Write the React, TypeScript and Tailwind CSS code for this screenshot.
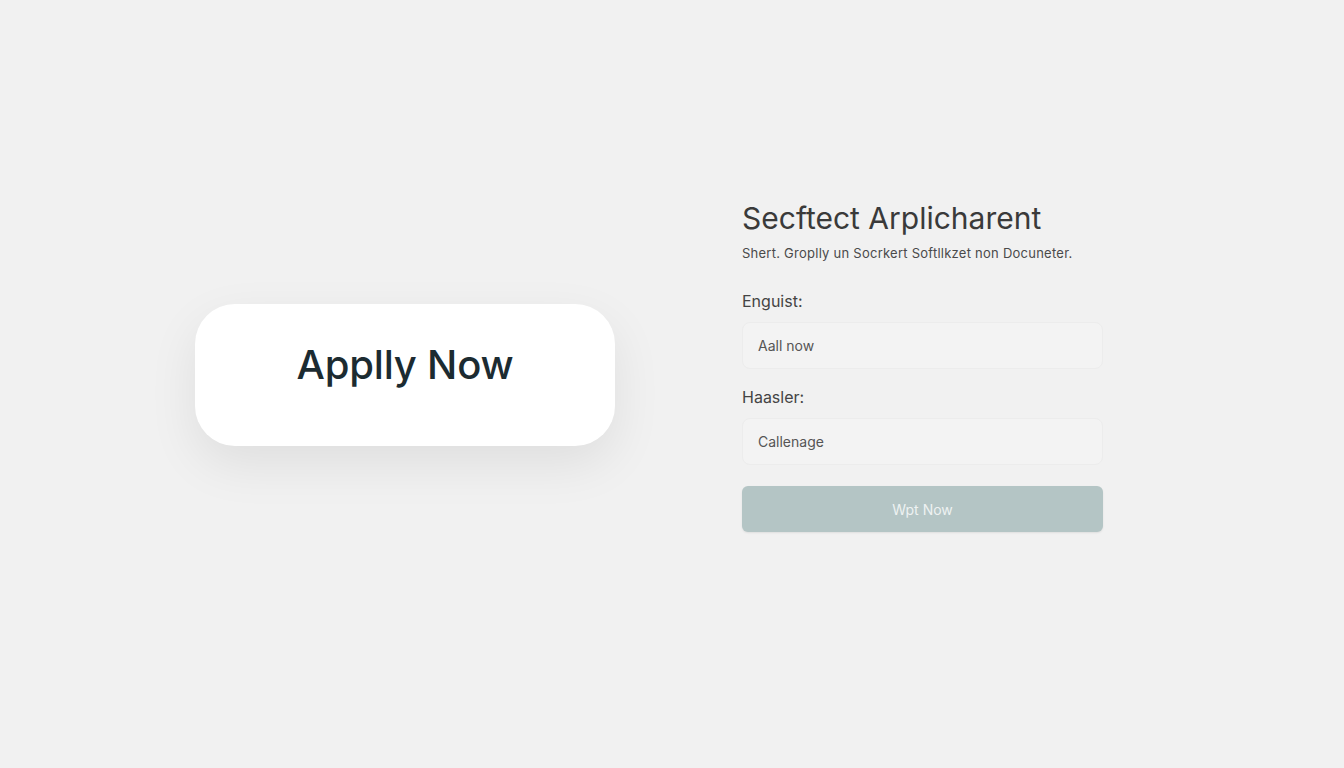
import { useState } from 'react';

const font = { fontFamily: 'Inter, "Liberation Sans", sans-serif' };

/**
 * Apply card + small form
 */
export default function App() {
  const [english, setEnglish] = useState('Aall now');
  const [hassler, setHassler] = useState('Callenage');

  return (
    <div className="min-h-screen w-full bg-[#f1f1f1] text-[#333]" style={font}>
      <div className="flex h-[768px] items-start">
        {/* big button */}
        <div className="pl-[195px] pt-[304px]">
          <button className="flex h-[142px] w-[420px] items-center justify-center rounded-[40px] bg-white pb-[20px] text-[40px] font-medium tracking-[-0.2px] text-[#1c2b31] shadow-[0_18px_50px_rgba(0,0,0,0.08)]">
            Applly Now
          </button>
        </div>

        {/* form */}
        <div className="ml-[127px] w-[361px] pt-[199px]">
          <h1 className="text-[30px] leading-[38px] font-normal text-[#3a3a3a]">Secftect Arplicharent</h1>
          <p className="mt-[7px] text-[13px] leading-[18px] tracking-[0.25px] text-[#4a4a4a]">
            Shert. Groplly un Socrkert Softllkzet non Docuneter.
          </p>

          <label className="mt-[29px] block text-[16px] leading-[20px] text-[#444]">Enguist:</label>
          <input
            value={english}
            onChange={(e) => setEnglish(e.target.value)}
            className="mt-[11px] block h-[47px] w-full rounded-[8px] border border-[#ececec] bg-[#f3f3f3] px-[15px] text-[14px] text-[#555] outline-none"
          />

          <label className="mt-[18px] block text-[16px] leading-[20px] text-[#444]">Haasler:</label>
          <input
            value={hassler}
            onChange={(e) => setHassler(e.target.value)}
            className="mt-[11px] block h-[47px] w-full rounded-[8px] border border-[#ececec] bg-[#f3f3f3] px-[15px] text-[14px] text-[#555] outline-none"
          />

          <button className="mt-[21px] flex h-[46px] w-full items-center justify-center rounded-[6px] bg-[#b4c5c5] text-[14px] text-[#eef2f2] shadow-[0_1px_2px_rgba(0,0,0,0.08)]">
            Wpt Now
          </button>
        </div>
      </div>
    </div>
  );
}
